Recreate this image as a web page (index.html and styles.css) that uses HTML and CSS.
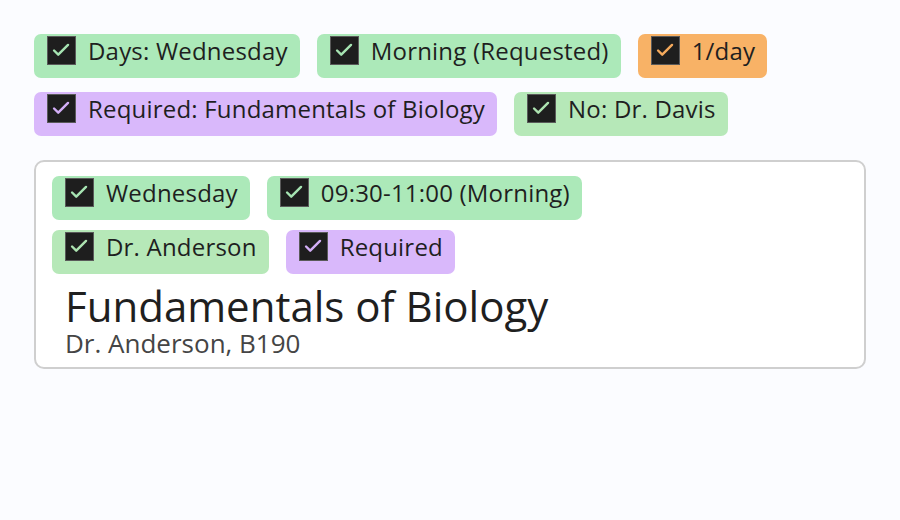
FILE: index.html
```html
<!DOCTYPE html>
<html>
<head>
<meta charset="utf-8">
<link rel="stylesheet" href="styles.css">
</head>
<body>
<div class="page">
  <div class="rows top">
    <div class="row">
      <span class="chip green"><span class="box"><svg viewBox="0 0 29 29"><path d="M6.5 14.5 L11 19 L21.5 8.5"/></svg></span><span class="label">Days: Wednesday</span></span>
      <span class="chip green"><span class="box"><svg viewBox="0 0 29 29"><path d="M6.5 14.5 L11 19 L21.5 8.5"/></svg></span><span class="label">Morning (Requested)</span></span>
      <span class="chip orange"><span class="box"><svg viewBox="0 0 29 29"><path d="M6.5 14.5 L11 19 L21.5 8.5"/></svg></span><span class="label">1/day</span></span>
    </div>
    <div class="row">
      <span class="chip purple"><span class="box"><svg viewBox="0 0 29 29"><path d="M6.5 14.5 L11 19 L21.5 8.5"/></svg></span><span class="label">Required: Fundamentals of Biology</span></span>
      <span class="chip green2"><span class="box"><svg viewBox="0 0 29 29"><path d="M6.5 14.5 L11 19 L21.5 8.5"/></svg></span><span class="label">No: Dr. Davis</span></span>
    </div>
  </div>
  <div class="card">
    <div class="rows inner">
      <div class="row">
        <span class="chip green"><span class="box"><svg viewBox="0 0 29 29"><path d="M6.5 14.5 L11 19 L21.5 8.5"/></svg></span><span class="label">Wednesday</span></span>
        <span class="chip green"><span class="box"><svg viewBox="0 0 29 29"><path d="M6.5 14.5 L11 19 L21.5 8.5"/></svg></span><span class="label">09:30-11:00 (Morning)</span></span>
      </div>
      <div class="row">
        <span class="chip green2"><span class="box"><svg viewBox="0 0 29 29"><path d="M6.5 14.5 L11 19 L21.5 8.5"/></svg></span><span class="label">Dr. Anderson</span></span>
        <span class="chip purple"><span class="box"><svg viewBox="0 0 29 29"><path d="M6.5 14.5 L11 19 L21.5 8.5"/></svg></span><span class="label">Required</span></span>
      </div>
    </div>
    <div class="title">Fundamentals of Biology</div>
    <div class="sub">Dr. Anderson, B190</div>
  </div>
</div>
</body>
</html>
```
FILE: styles.css
```css
html, body {
  margin: 0;
  padding: 0;
  background: #fbfcff;
}
body {
  font-family: "Open Sans", "Noto Sans", sans-serif;
  color: #1f1f1f;
}
.page {
  padding: 34px 34px 0 34px;
  width: 832px;
}
.rows {
  display: flex;
  flex-direction: column;
}
.rows.top { row-gap: 14px; }
.rows.inner { row-gap: 10px; }
.row {
  display: flex;
  column-gap: 17px;
}
.chip {
  display: flex;
  align-items: flex-start;
  height: 44px;
  box-sizing: border-box;
  padding: 2px 12px 0 13px;
  border-radius: 7px;
  gap: 12px;
}
.box {
  width: 29px;
  height: 29px;
  box-sizing: border-box;
  border: 1px solid #5a5a5a;
  background: #1e1e1e;
  display: block;
  flex: none;
}
.box svg {
  display: block;
  width: 27px;
  height: 27px;
  fill: none;
  stroke-width: 2.6;
  stroke-linecap: round;
  stroke-linejoin: round;
}
.label {
  font-size: 24px;
  line-height: 29px;
  letter-spacing: 0.2px;
  white-space: nowrap;
}
.green { background: #ace9b9; }
.green .box svg { stroke: #a6e4b2; }
.green2 { background: #b6e8b8; }
.green2 .box svg { stroke: #ade3b0; }
.orange { background: #f8b266; }
.orange .box svg { stroke: #f4a95c; }
.purple { background: #d9b8fb; }
.purple .box svg { stroke: #d2aef6; }
.card {
  margin-top: 24px;
  border: 2px solid #cfcfcf;
  border-radius: 10px;
  background: #ffffff;
  padding: 14px 16px 9px 16px;
}
.title {
  font-size: 42px;
  line-height: 44px;
  padding-left: 13px;
  margin-top: 10px;
}
.sub {
  font-size: 26px;
  line-height: 30px;
  padding-left: 13px;
  color: #454545;
}
```
